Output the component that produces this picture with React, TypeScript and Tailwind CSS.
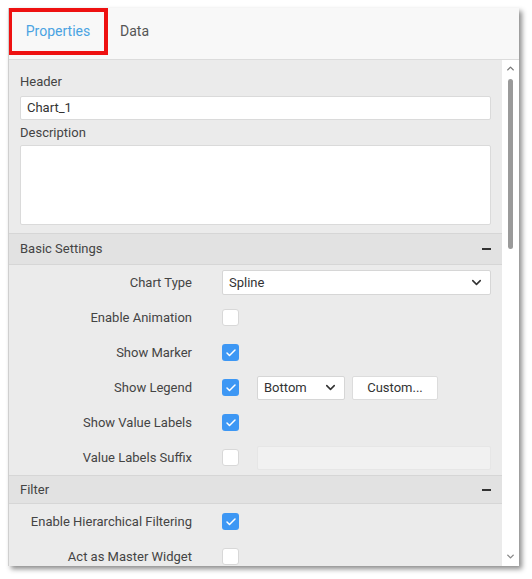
import { ChevronDown, ChevronUp, Check } from "lucide-react";

const font = { fontFamily: "Roboto, 'Liberation Sans', sans-serif" };

function Box({ checked }: { checked?: boolean }) {
  return checked ? (
    <span className="w-[17px] h-[17px] rounded-[3px] bg-[#3d97f4] flex items-center justify-center">
      <Check className="w-[12px] h-[12px] text-white" strokeWidth={3} />
    </span>
  ) : (
    <span className="w-[17px] h-[17px] rounded-[3px] bg-white border border-[#d8d8d8]" />
  );
}

function Row({ label, children }: { label: string; children: React.ReactNode }) {
  return (
    <div className="h-[35px] flex items-center">
      <div className="w-[183px] text-right text-[13px] text-[#444]">{label}</div>
      <div className="ml-[30px] flex items-center flex-1 pr-[11px]">{children}</div>
    </div>
  );
}

function SectionHead({ title, h }: { title: string; h: string }) {
  return (
    <div className={`${h} flex items-center justify-between px-[11px] bg-[#e2e2e2] border-y border-[#d6d6d6]`}>
      <span className="text-[13px] text-[#444]">{title}</span>
      <span className="w-[9px] h-[2px] bg-[#333]" />
    </div>
  );
}

export default function App() {
  return (
    <div className="w-[532px] h-[579px] bg-white pt-[8px] pl-[8px]" style={font}>
      <div className="w-[511px] h-[558px] flex flex-col border-l border-[#cfcfcf] shadow-[3px_3px_5px_rgba(0,0,0,0.45)] overflow-hidden">
        {/* tabs */}
        <div className="h-[52px] bg-[#f8f8f8] border-b border-[#dcdcdc] flex items-start">
          <div className="-ml-[1px] w-[100px] h-[47px] border-[4px] border-[#ee1111] flex items-center justify-center text-[14px] text-[#4aa3e2]">
            Properties
          </div>
          <div className="ml-[12px] h-[46px] flex items-center text-[14px] text-[#555]">Data</div>
        </div>

        <div className="flex flex-1 min-h-0">
          <div className="flex-1 bg-[#ebebeb] overflow-hidden">
            <div className="px-[11px] pt-[12px] pb-[8px]">
              <div className="h-[20px] leading-[20px] text-[13px] text-[#444]">Header</div>
              <div className="mt-[4px] h-[24px] bg-white border border-[#dadada] rounded-[2px] flex items-center px-[6px] text-[13px] text-[#333]">
                Chart_1
              </div>
              <div className="mt-[3px] h-[20px] leading-[20px] text-[13px] text-[#444]">Description</div>
              <div className="mt-[2px] h-[80px] bg-white border border-[#dadada] rounded-[2px]" />
            </div>

            <SectionHead title="Basic Settings" h="h-[32px]" />
            <Row label="Chart Type">
              <div className="flex-1 h-[25px] bg-white border border-[#d6d6d6] rounded-[2px] flex items-center justify-between px-[6px] text-[13px] text-[#333]">
                <span>Spline</span>
                <ChevronDown className="w-[15px] h-[15px] text-[#333]" strokeWidth={2.5} />
              </div>
            </Row>
            <Row label="Enable Animation">
              <Box />
            </Row>
            <Row label="Show Marker">
              <Box checked />
            </Row>
            <Row label="Show Legend">
              <Box checked />
              <div className="ml-[18px] w-[88px] h-[24px] bg-white border border-[#d6d6d6] rounded-[2px] flex items-center justify-between px-[6px] text-[13px] text-[#333]">
                <span>Bottom</span>
                <ChevronDown className="w-[15px] h-[15px] text-[#333]" strokeWidth={2.5} />
              </div>
              <div className="ml-[7px] w-[86px] h-[24px] bg-white border border-[#dcdcdc] rounded-[2px] flex items-center justify-center text-[13px] text-[#333]">
                Custom...
              </div>
            </Row>
            <Row label="Show Value Labels">
              <Box checked />
            </Row>
            <Row label="Value Labels Suffix">
              <Box />
              <div className="ml-[18px] flex-1 h-[24px] bg-[#f1f1f1] border border-[#e6e6e6] rounded-[2px]" />
            </Row>

            <SectionHead title="Filter" h="h-[29px]" />
            <Row label="Enable Hierarchical Filtering">
              <Box checked />
            </Row>
            <Row label="Act as Master Widget">
              <Box />
            </Row>
          </div>

          {/* scrollbar */}
          <div className="w-[17px] bg-white flex flex-col items-center">
            <ChevronUp className="mt-[3px] w-[11px] h-[11px] text-[#777]" strokeWidth={3} />
            <div className="mt-[5px] w-[5px] h-[170px] rounded-full bg-[#9a9a9a]" />
            <div className="flex-1" />
            <ChevronDown className="mb-[4px] w-[11px] h-[11px] text-[#888]" strokeWidth={3} />
          </div>
        </div>
      </div>
    </div>
  );
}
